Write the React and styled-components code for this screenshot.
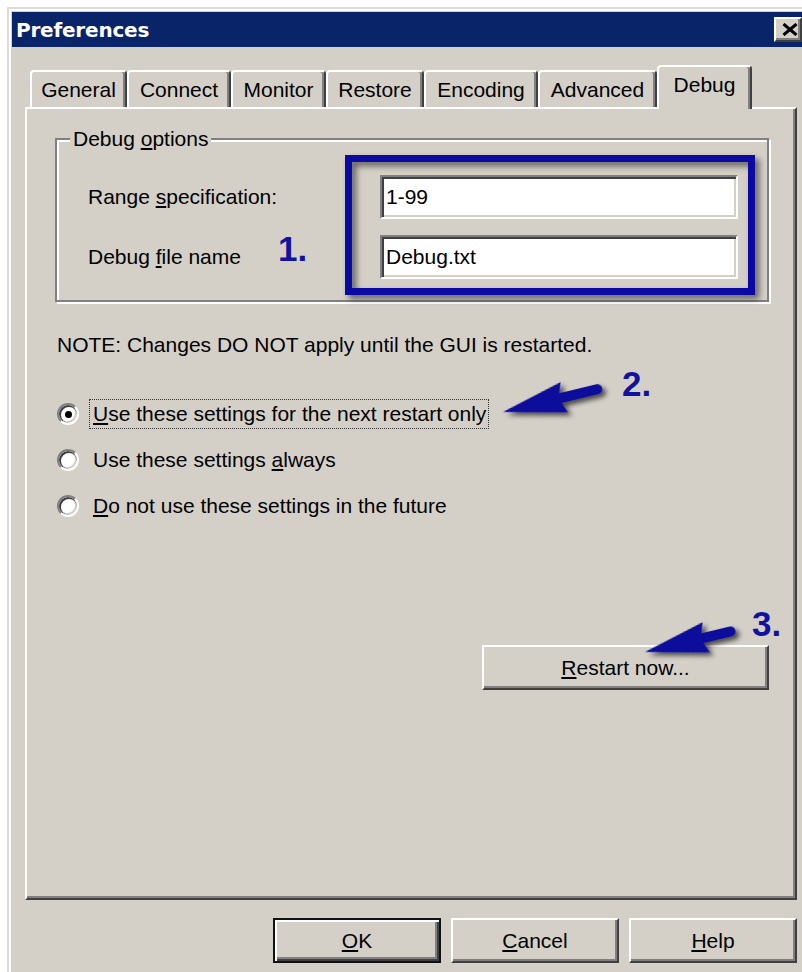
import React from 'react';
import styled, { createGlobalStyle } from 'styled-components';

const face = '#d4d0c8';
const shadow = '#808080';
const darkShadow = '#404040';
const ink = '#1212a0';

const GlobalStyle = createGlobalStyle`
  html, body {
    margin: 0;
    padding: 0;
    background: #fff;
    overflow: hidden;
  }
  body {
    font-family: 'Liberation Sans', Arial, sans-serif;
    color: #000;
  }
`;

const tabs = [
  { label: 'General', width: 97 },
  { label: 'Connect', width: 104 },
  { label: 'Monitor', width: 95 },
  { label: 'Restore', width: 98 },
  { label: 'Encoding', width: 114 },
  { label: 'Advanced', width: 119 },
  { label: 'Debug', width: 95, active: true },
];

const App = () => (
  <>
    <GlobalStyle />
    <Page>
      <Window>
        <TitleBar>
          <Title>Preferences</Title>
          <CloseButton aria-label="Close">
            <svg width="16" height="13" viewBox="0 0 16 13">
              <path d="M1.5 1 L14.5 12 M14.5 1 L1.5 12" stroke="#000" strokeWidth="3" />
            </svg>
          </CloseButton>
        </TitleBar>

        <Body>
          <TabStrip>
            {tabs.map((t) => (
              <Tab key={t.label} $w={t.width} $active={t.active}>
                {t.label}
              </Tab>
            ))}
          </TabStrip>

          <Panel>
            <GroupBox>
              <GroupCaption>
                Debug <u>o</u>ptions
              </GroupCaption>
              <FieldGrid>
                <FieldLabel>
                  Range <u>s</u>pecification:
                </FieldLabel>
                <TextField defaultValue="1-99" />
                <FieldLabel>
                  Debug <u>f</u>ile name
                </FieldLabel>
                <TextField defaultValue="Debug.txt" />
              </FieldGrid>
            </GroupBox>

            <Note>NOTE: Changes DO NOT apply until the GUI is restarted.</Note>

            <RadioList>
              <RadioRow>
                <Radio $checked />
                <RadioLabel $focused>
                  <u>U</u>se these settings for the next restart only
                </RadioLabel>
              </RadioRow>
              <RadioRow>
                <Radio />
                <RadioLabel>
                  Use these settings <u>a</u>lways
                </RadioLabel>
              </RadioRow>
              <RadioRow>
                <Radio />
                <RadioLabel>
                  <u>D</u>o not use these settings in the future
                </RadioLabel>
              </RadioRow>
            </RadioList>

            <RestartButton>
              <span>
                <u>R</u>estart now...
              </span>
            </RestartButton>
          </Panel>

          <ButtonRow>
            <DialogButton $default>
              <span>
                <u>O</u>K
              </span>
            </DialogButton>
            <DialogButton>
              <span>
                <u>C</u>ancel
              </span>
            </DialogButton>
            <DialogButton>
              <span>
                <u>H</u>elp
              </span>
            </DialogButton>
          </ButtonRow>
        </Body>
      </Window>

      {/* callouts drawn on top of the dialog */}
      <Callouts>
        <HighlightBox />
        <StepNumber $x={278} $y={231}>1.</StepNumber>
        <StepNumber $x={622} $y={366}>2.</StepNumber>
        <StepNumber $x={752} $y={606}>3.</StepNumber>
        <ArrowLayer width="802" height="972" viewBox="0 0 802 972">
          <defs>
            <filter id="arrowShadow" x="-20%" y="-40%" width="150%" height="200%">
              <feDropShadow dx="3" dy="4" stdDeviation="2.8" floodColor="#000" floodOpacity="0.65" />
            </filter>
          </defs>
          <Arrow x={503} y={412} angle={-13.6} length={97} />
          <Arrow x={645} y={652} angle={-13.5} length={88} />
        </ArrowLayer>
      </Callouts>
    </Page>
  </>
);

const Arrow = ({ x, y, angle, length }) => (
  <path
    transform={`translate(${x} ${y}) rotate(${angle})`}
    d={`M0,0 L63,-15.5 L59,-5 L${length},-5 A5,5 0 0 1 ${length},5 L59,5 L63,15.5 Z`}
    fill="#0c0c9c"
    filter="url(#arrowShadow)"
  />
);

export default App;

const Page = styled.div`
  position: relative;
  width: 802px;
  height: 972px;
  overflow: hidden;
`;

const Window = styled.div`
  margin: 7px 0 0 7px;
  width: 802px;
  height: 990px;
  box-sizing: border-box;
  background: ${face};
  border: 2px solid ${face};
  border-color: #dedbd6 ${darkShadow} ${darkShadow} #dedbd6;
  box-shadow: inset 2px 2px 0 #fff, inset -2px -2px 0 ${shadow};
  padding: 3px;
  display: flex;
  flex-direction: column;
`;

const TitleBar = styled.div`
  height: 35px;
  background: #0a246a;
  display: flex;
  align-items: center;
  justify-content: space-between;
  padding-left: 4px;
`;

const Title = styled.div`
  color: #fff;
  font-family: 'DejaVu Sans', Verdana, sans-serif;
  font-weight: 700;
  font-size: 20px;
  letter-spacing: -0.2px;
`;

const CloseButton = styled.div`
  width: 28px;
  height: 25px;
  margin-right: 2px;
  box-sizing: border-box;
  background: ${face};
  border: 2px solid;
  border-color: #fff ${darkShadow} ${darkShadow} #fff;
  box-shadow: inset -2px -2px 0 ${shadow};
  display: flex;
  align-items: center;
  justify-content: center;
  padding: 0 0 1px 3px;
`;

const Body = styled.div`
  flex: 1;
  display: flex;
  flex-direction: column;
  padding: 18px 7px 0 13px;
`;

const TabStrip = styled.div`
  height: 42px;
  display: flex;
  align-items: flex-end;
  padding-left: 5px;
`;

const Tab = styled.div`
  position: relative;
  width: ${(p) => p.$w}px;
  height: ${(p) => (p.$active ? 44 : 37)}px;
  margin-bottom: ${(p) => (p.$active ? -2 : 0)}px;
  z-index: ${(p) => (p.$active ? 1 : 0)};
  box-sizing: border-box;
  background: ${face};
  border: 2px solid;
  border-bottom: none;
  border-color: #fff ${darkShadow} transparent #fff;
  border-radius: 4px 4px 0 0;
  box-shadow: inset -2px 0 0 ${shadow};
  display: flex;
  align-items: center;
  justify-content: center;
  padding-bottom: ${(p) => (p.$active ? 7 : 0)}px;
  font-size: 21px;
  line-height: 24px;
`;

const Panel = styled.div`
  height: 793px;
  box-sizing: border-box;
  border: 2px solid;
  border-color: #fff ${darkShadow} ${darkShadow} #fff;
  box-shadow: inset -2px -2px 0 ${shadow};
  padding: 0 26px 0 28px;
  display: flex;
  flex-direction: column;
  font-size: 21px;
  line-height: 24px;
`;

const GroupBox = styled.div`
  margin-top: 29px;
  border: 2px solid ${shadow};
  box-shadow: inset 2px 2px 0 #fff, 2px 2px 0 #fff;
  padding: 0 29px 21px 31px;
  display: flex;
  flex-direction: column;
`;

const GroupCaption = styled.div`
  align-self: flex-start;
  margin: -13px 0 0 -18px;
  padding: 0 3px;
  background: ${face};
`;

const FieldGrid = styled.div`
  margin-top: 24px;
  display: grid;
  grid-template-columns: 1fr 358px;
  grid-auto-rows: 44px;
  row-gap: 16px;
  align-items: center;
`;

const FieldLabel = styled.div``;

const TextField = styled.input`
  height: 44px;
  width: 100%;
  box-sizing: border-box;
  margin: 0;
  border: 2px solid;
  border-color: ${shadow} #fff #fff ${shadow};
  box-shadow: inset 2px 2px 0 ${darkShadow}, inset -2px -2px 0 ${face};
  background: #fff;
  padding: 0 3px 0 4px;
  font-family: 'Liberation Sans', Arial, sans-serif;
  font-size: 21px;
  color: #000;
  outline: none;
`;

const Note = styled.div`
  margin-top: 31px;
  padding-left: 2px;
`;

const RadioList = styled.div`
  margin-top: 42px;
  display: flex;
  flex-direction: column;
  gap: 16px;
`;

const RadioRow = styled.div`
  height: 30px;
  display: flex;
  align-items: center;
  padding-left: 2px;
`;

const Radio = styled.span`
  position: relative;
  flex: none;
  width: 22px;
  height: 22px;
  box-sizing: border-box;
  border-radius: 50%;
  background: #fff;
  border: 2px solid;
  border-color: ${shadow} #fff #fff ${shadow};
  box-shadow: inset 1px 1px 0 1px ${darkShadow}, inset -1px -1px 0 1px ${face};

  &::after {
    content: '';
    display: ${(p) => (p.$checked ? 'block' : 'none')};
    position: absolute;
    left: 50%;
    top: 50%;
    width: 7px;
    height: 7px;
    margin: -3.5px 0 0 -3.5px;
    border-radius: 50%;
    background: #000;
  }
`;

const RadioLabel = styled.span`
  display: inline-block;
  margin-left: 10px;
  height: 30px;
  box-sizing: border-box;
  line-height: 27px;
  padding: 0 2px 0 3px;
  white-space: pre;
  border: 1.5px dotted ${(p) => (p.$focused ? '#333' : 'transparent')};
`;

const bevel = `
  background: ${face};
  border: 2px solid;
  border-color: #fff ${darkShadow} ${darkShadow} #fff;
  box-shadow: inset -2px -2px 0 ${shadow};
`;

const RestartButton = styled.div`
  ${bevel}
  margin-top: 124px;
  align-self: flex-end;
  width: 287px;
  height: 45px;
  box-sizing: border-box;
  display: flex;
  align-items: center;
  justify-content: center;
`;

const ButtonRow = styled.div`
  margin-top: 18px;
  display: flex;
  justify-content: flex-end;
  gap: 10px;
`;

const DialogButton = styled.div`
  ${bevel}
  width: 168px;
  height: 45px;
  box-sizing: border-box;
  display: flex;
  align-items: center;
  justify-content: center;
  font-size: 21px;
  ${(p) =>
    p.$default &&
    `
    border-color: #111;
    box-shadow: inset 2px 2px 0 #fff, inset -2px -2px 0 ${darkShadow}, inset -4px -4px 0 ${shadow};
  `}
`;

const Callouts = styled.div`
  position: absolute;
  inset: 0;
  pointer-events: none;
`;

const HighlightBox = styled.div`
  position: absolute;
  left: 345px;
  top: 155px;
  width: 410px;
  height: 140px;
  box-sizing: border-box;
  border: 7px solid #0a0aa2;
  filter: drop-shadow(4px 4px 3px rgba(0, 0, 0, 0.55));
`;

const StepNumber = styled.div`
  position: absolute;
  left: ${(p) => p.$x}px;
  top: ${(p) => p.$y}px;
  font-family: 'Liberation Sans', Arial, sans-serif;
  font-weight: 700;
  font-size: 35px;
  line-height: 35px;
  color: ${ink};
`;

const ArrowLayer = styled.svg`
  position: absolute;
  left: 0;
  top: 0;
`;
